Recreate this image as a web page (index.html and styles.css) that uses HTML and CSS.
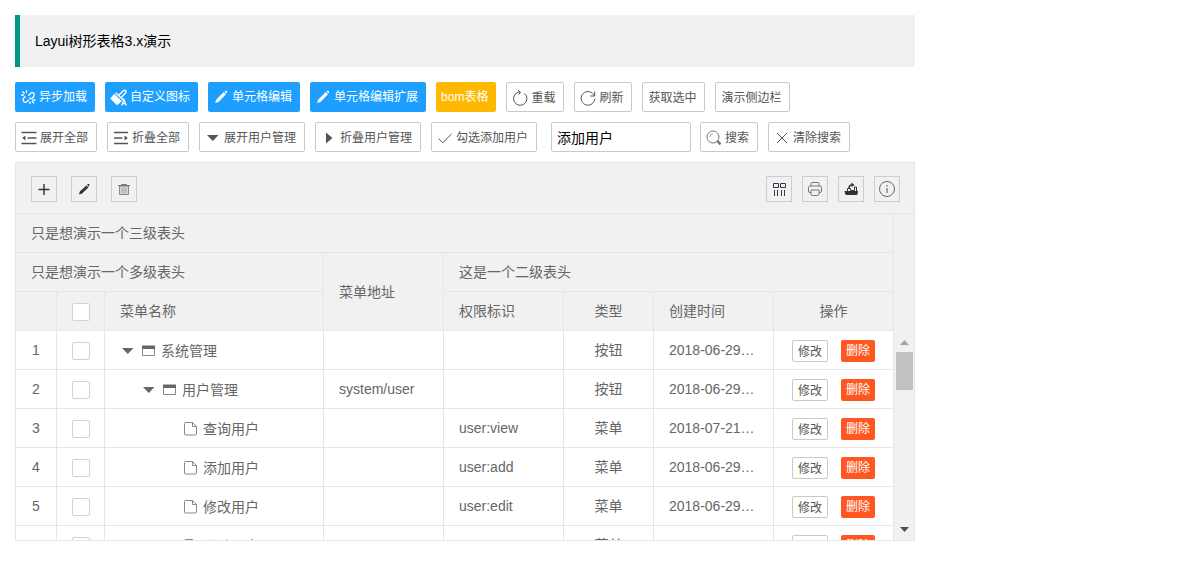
FILE: index.html
```html
<!DOCTYPE html>
<html lang="zh-CN">
<head>
<meta charset="utf-8">
<title>Layui树形表格3.x演示</title>
<link rel="stylesheet" href="styles.css">
</head>
<body>
<svg class="sprite" aria-hidden="true">
  <symbol id="i-down" viewBox="0 0 16 16"><path d="M2 5h11.500L7.800 11z" fill="currentColor"/></symbol>
  <symbol id="i-right" viewBox="0 0 16 16"><path d="M5 2.500v11L11.500 8z" fill="currentColor"/></symbol>
  <symbol id="i-window" viewBox="0 0 16 16"><path d="M1.500 3.500h12v9h-12z" fill="none" stroke="#888"/><path d="M1 2.500h13v3.500H1z" fill="currentColor"/></symbol>
  <symbol id="i-file" viewBox="0 0 16 16"><path d="M2.500 1.500h7l4 4V13q0 1-1 1h-10q-1 0-1-1V2.500q0-1 1-1zM9.500 1.500v4h4" fill="none" stroke="#888"/></symbol>
  <symbol id="i-pen" viewBox="0 0 16 16"><path d="M2.200 14l1-3.300 7.600-7.600 2.200 2.200-7.500 7.600zM11.600 2.500l.7-.6q.8-.5 1.500.2t.2 1.500l-.6.8z" fill="currentColor"/></symbol>
  <symbol id="i-edit" viewBox="0 0 16 16"><path d="M3 13.500l.8-3 6.600-6 2 2-6.600 6.200zM11 4l1-.9q.8-.4 1.300.1t.1 1.300l-.9 1z" fill="currentColor"/></symbol>
  <symbol id="i-link" viewBox="0 0 16 16"><g fill="none" stroke="currentColor" stroke-width="1.300"><path d="M5.500 7.200L3.800 9q-1.500 2 0 3.400t3.400 0L9 10.600M8.400 6.700l2.300-2.400q1.700-1.300 3 0t0 3.200L11.500 10M9.500 8.500l1.700 1.800"/><path d="M1 6h3M2.300 2.500l2.400 2M6.500 1v3M12 12l2.200 2.400M10 12.500V15M12.500 11h3"/></g></symbol>
  <symbol id="i-brush" viewBox="0 0 16 16"><path d="M4 4.500l7 6.800-2 2.200-2.500 1.700L.2 9z" fill="currentColor"/><path d="M5.300 3.500l7 6.700M8.500 5.700l4.200-4.200q1.200-.8 2 0t0 2L10.800 7.800" fill="none" stroke="currentColor" stroke-width="1.300"/><path d="M11 15.500l2.100-5.500 2.200 5.500M11.800 13.800h2.700" fill="none" stroke="currentColor" stroke-width="1.200"/></symbol>
  <symbol id="i-reload" viewBox="0 0 16 16"><path d="M8 2.200H6.200A6.700 6.700 0 1 0 12.600 3.500M5.800 0l2.800 2.200-2 2.400" fill="none" stroke="currentColor"/></symbol>
  <symbol id="i-refresh" viewBox="0 0 16 16"><path d="M14.300 6A6.800 6.800 0 1 0 14.700 9M14.700 1.500V6h-4.500" fill="none" stroke="currentColor"/></symbol>
  <symbol id="i-spread" viewBox="0 0 16 16"><path d="M.5 2.500h15M6.500 8h9M.5 13.500h15" stroke="currentColor" stroke-width="1.500"/><path d="M4.500 5.500v5L1.200 8z" fill="currentColor"/></symbol>
  <symbol id="i-shrink" viewBox="0 0 16 16"><path d="M1 2.500h14M1 8h8.500M1 13.500h14" stroke="currentColor" stroke-width="1.500"/><path d="M11.500 5.500v5L14.800 8z" fill="currentColor"/></symbol>
  <symbol id="i-check" viewBox="0 0 16 16"><path d="M1.500 8.500l4.300 4.200L14.500 4" fill="none" stroke="currentColor"/></symbol>
  <symbol id="i-search" viewBox="0 0 16 16"><circle cx="7" cy="7" r="6" fill="none" stroke="#777"/><path d="M3.800 7A3.300 3.300 0 0 1 7 3.800" fill="none" stroke="#777" stroke-width=".7"/><path d="M11.300 10.800l3.200 3.600" stroke="#777" stroke-width="2.400"/></symbol>
  <symbol id="i-close" viewBox="0 0 16 16"><path d="M3 3l10 10M13 3L3 13" stroke="currentColor"/></symbol>
  <symbol id="i-plus" viewBox="0 0 16 16"><path d="M8 3v11M2.500 8.500h11" stroke="currentColor" stroke-width="1.400"/></symbol>
  <symbol id="i-trash" viewBox="0 0 16 16"><path d="M3.500 5h9v8.500h-9z" fill="#d4d6cf" stroke="#888"/><path d="M2 4.500h12M5.500 4V3.500h5V4" fill="none" stroke="#777"/><path d="M6 6.500v5.500M8 6.500v5.500M10 6.500v5.500" stroke="#aaa"/></symbol>
  <symbol id="i-cols" viewBox="0 0 16 16"><path d="M2.500 2.500h5v4h-5zM9.500 2.500h5v4h-5zM3.500 9v6M6.500 9v6M10.500 9v6M13.500 9v6" fill="none" stroke="#43304a"/></symbol>
  <symbol id="i-print" viewBox="0 0 16 16"><path d="M4 5V2.500q0-1 1-1h6q1 0 1 1V5M4 11.500H2.500Q1.500 11.500 1.500 10V6.500Q1.500 5 3 5h10q1.500 0 1.500 1.500V10q0 1.500-1 1.500H12M4 9h8v4q0 1.500-1.500 1.500h-5Q4 14.500 4 13z" fill="none" stroke="#777"/></symbol>
  <symbol id="i-export" viewBox="0 0 16 16"><path d="M1.500 10h13.500q-.2 4-1.500 4H3.500Q2 14 1.500 10z" fill="currentColor"/><path d="M4.500 10V7.500h3V9.500h4V6H13.500V10" fill="none" stroke="currentColor"/><path d="M6 7Q6 4 9 4" fill="none" stroke="currentColor" stroke-width="1.400"/><path d="M8.500 1.500v4.500L11.500 4z" fill="currentColor"/></symbol>
  <symbol id="i-info" viewBox="0 0 16 16"><circle cx="8" cy="8" r="7.500" fill="none" stroke="#666"/><path d="M8 7v5M8 4v1.500" stroke="#777" stroke-width="1.300"/></symbol>
</svg>

<main class="page">
  <blockquote class="quote">Layui树形表格3.x演示</blockquote>

  <div class="bar">
    <button class="btn btn-blue" type="button"><svg class="icon"><use href="#i-link"/></svg>异步加载</button>
    <button class="btn btn-blue" type="button"><svg class="icon icon-wide"><use href="#i-brush"/></svg>自定义图标</button>
    <button class="btn btn-blue" type="button"><svg class="icon"><use href="#i-pen"/></svg>单元格编辑</button>
    <button class="btn btn-blue" type="button"><svg class="icon"><use href="#i-pen"/></svg>单元格编辑扩展</button>
    <button class="btn btn-yellow" type="button">bom表格</button>
    <button class="btn btn-plain" type="button"><svg class="icon"><use href="#i-reload"/></svg>重载</button>
    <button class="btn btn-plain" type="button"><svg class="icon"><use href="#i-refresh"/></svg>刷新</button>
    <button class="btn btn-plain" type="button">获取选中</button>
    <button class="btn btn-plain" type="button">演示侧边栏</button>
  </div>

  <div class="bar">
    <button class="btn btn-plain" type="button"><svg class="icon"><use href="#i-spread"/></svg>展开全部</button>
    <button class="btn btn-plain" type="button"><svg class="icon"><use href="#i-shrink"/></svg>折叠全部</button>
    <button class="btn btn-plain" type="button"><svg class="icon"><use href="#i-down"/></svg>展开用户管理</button>
    <button class="btn btn-plain" type="button"><svg class="icon"><use href="#i-right"/></svg>折叠用户管理</button>
    <button class="btn btn-plain" type="button"><svg class="icon"><use href="#i-check"/></svg>勾选添加用户</button>
    <div class="search">
      <input class="input" type="text" value="添加用户" aria-label="搜索关键字">
      <button class="btn btn-plain" type="button"><svg class="icon"><use href="#i-search"/></svg>搜索</button>
    </div>
    <button class="btn btn-plain" type="button"><svg class="icon"><use href="#i-close"/></svg>清除搜索</button>
  </div>

  <section class="grid">
    <div class="tools">
      <div class="tools-left">
        <button class="tool" type="button" aria-label="添加"><svg class="icon"><use href="#i-plus"/></svg></button>
        <button class="tool" type="button" aria-label="编辑"><svg class="icon"><use href="#i-edit"/></svg></button>
        <button class="tool" type="button" aria-label="删除"><svg class="icon"><use href="#i-trash"/></svg></button>
      </div>
      <div class="tools-right">
        <button class="tool" type="button" aria-label="筛选列"><svg class="icon"><use href="#i-cols"/></svg></button>
        <button class="tool" type="button" aria-label="打印"><svg class="icon"><use href="#i-print"/></svg></button>
        <button class="tool" type="button" aria-label="导出"><svg class="icon"><use href="#i-export"/></svg></button>
        <button class="tool" type="button" aria-label="提示"><svg class="icon"><use href="#i-info"/></svg></button>
      </div>
    </div>

    <div class="head">
      <table class="table">
        <colgroup><col class="c-num"><col class="c-check"><col><col class="c-mid"><col class="c-mid"><col class="c-type"><col class="c-mid"><col class="c-mid"></colgroup>
        <thead>
          <tr><th colspan="8">只是想演示一个三级表头</th></tr>
          <tr><th colspan="3">只是想演示一个多级表头</th><th rowspan="2">菜单地址</th><th colspan="4">这是一个二级表头</th></tr>
          <tr><th></th><th class="center"><input class="check" type="checkbox" aria-label="全选"></th><th>菜单名称</th><th>权限标识</th><th class="center">类型</th><th>创建时间</th><th class="center">操作</th></tr>
        </thead>
      </table>
    </div>

    <div class="body">
      <div class="rows">
        <table class="table">
          <colgroup><col class="c-num"><col class="c-check"><col><col class="c-mid"><col class="c-mid"><col class="c-type"><col class="c-mid"><col class="c-mid"></colgroup>
          <tbody>
            <tr><td class="center">1</td><td class="center"><input class="check" type="checkbox" aria-label="选择系统管理"></td>
              <td><div class="node"><svg class="icon arrow"><use href="#i-down"/></svg><svg class="icon"><use href="#i-window"/></svg>系统管理</div></td>
              <td></td><td></td><td class="center">按钮</td><td>2018-06-29…</td>
              <td><div class="acts"><button class="mini btn-plain" type="button">修改</button><button class="mini btn-red" type="button">删除</button></div></td></tr>
            <tr><td class="center">2</td><td class="center"><input class="check" type="checkbox" aria-label="选择用户管理"></td>
              <td><div class="node level-1"><svg class="icon arrow"><use href="#i-down"/></svg><svg class="icon"><use href="#i-window"/></svg>用户管理</div></td>
              <td>system/user</td><td></td><td class="center">按钮</td><td>2018-06-29…</td>
              <td><div class="acts"><button class="mini btn-plain" type="button">修改</button><button class="mini btn-red" type="button">删除</button></div></td></tr>
            <tr><td class="center">3</td><td class="center"><input class="check" type="checkbox" aria-label="选择查询用户"></td>
              <td><div class="node leaf"><svg class="icon"><use href="#i-file"/></svg>查询用户</div></td>
              <td></td><td>user:view</td><td class="center">菜单</td><td>2018-07-21…</td>
              <td><div class="acts"><button class="mini btn-plain" type="button">修改</button><button class="mini btn-red" type="button">删除</button></div></td></tr>
            <tr><td class="center">4</td><td class="center"><input class="check" type="checkbox" aria-label="选择添加用户"></td>
              <td><div class="node leaf"><svg class="icon"><use href="#i-file"/></svg>添加用户</div></td>
              <td></td><td>user:add</td><td class="center">菜单</td><td>2018-06-29…</td>
              <td><div class="acts"><button class="mini btn-plain" type="button">修改</button><button class="mini btn-red" type="button">删除</button></div></td></tr>
            <tr><td class="center">5</td><td class="center"><input class="check" type="checkbox" aria-label="选择修改用户"></td>
              <td><div class="node leaf"><svg class="icon"><use href="#i-file"/></svg>修改用户</div></td>
              <td></td><td>user:edit</td><td class="center">菜单</td><td>2018-06-29…</td>
              <td><div class="acts"><button class="mini btn-plain" type="button">修改</button><button class="mini btn-red" type="button">删除</button></div></td></tr>
            <tr><td class="center">6</td><td class="center"><input class="check" type="checkbox" aria-label="选择删除用户"></td>
              <td><div class="node leaf"><svg class="icon"><use href="#i-file"/></svg>删除用户</div></td>
              <td></td><td></td><td class="center">菜单</td><td>2018-06-29…</td>
              <td><div class="acts"><button class="mini btn-plain" type="button">修改</button><button class="mini btn-red" type="button">删除</button></div></td></tr>
          </tbody>
        </table>
      </div>
      <div class="scroll" aria-hidden="true">
        <svg class="scroll-arrow up" viewBox="0 0 17 17"><path d="M4 10h9L8.500 5z" fill="currentColor"/></svg>
        <div class="thumb"></div>
        <svg class="scroll-arrow down" viewBox="0 0 17 17"><path d="M4 7h9l-4.500 5z" fill="currentColor"/></svg>
      </div>
    </div>
  </section>
</main>
</body>
</html>
```

FILE: styles.css
```css
* { box-sizing: border-box; }

body,
button,
input {
  font-family: "Liberation Sans", "Noto Sans CJK SC", sans-serif;
}

body {
  margin: 0;
  padding: 15px;
  background: #fff;
  color: #000;
  font-size: 14px;
  line-height: 22px;
}

.sprite {
  position: absolute;
  width: 0;
  height: 0;
}

.page { max-width: 900px; }

.quote {
  margin: 0 0 15px;
  padding: 15px;
  border-left: 5px solid #009688;
  background: #f1f1f1;
}

.icon {
  flex: none;
  width: 16px;
  height: 16px;
}

.icon-wide {
  width: 17px;
  height: 17px;
}

/* Buttons above the grid */
.bar {
  display: flex;
  flex-wrap: wrap;
  gap: 10px;
  margin-bottom: 10px;
}

.btn {
  display: flex;
  align-items: center;
  gap: 3px;
  height: 30px;
  padding: 0 8px 0 5px;
  border: 0;
  border-radius: 2px;
  color: #fff;
  font-size: 12px;
  line-height: 18px;
  white-space: nowrap;
}

.btn-blue { background: #1e9fff; }
.btn-yellow { background: #ffb800; }
.btn-red { background: #ff5722; }

.btn-plain {
  padding-top: 2px;
  border: 1px solid #c9c9c9;
  background: #fff;
  color: #555;
}

.search {
  display: flex;
  gap: 9px;
  margin-left: 4px;
}

.input {
  width: 140px;
  height: 30px;
  padding: 0 5px;
  border: 1px solid #c9c9c9;
  border-radius: 2px;
  background: #fff;
  color: #000;
  font-size: 14px;
}

/* Grid frame and its toolbar */
.grid {
  border: 1px solid #e6e6e6;
  color: #666;
}

.tools {
  display: flex;
  justify-content: space-between;
  padding: 13px 14px 11px 15px;
  border-bottom: 1px solid #e6e6e6;
  background: #f1f1f1;
}

.tools-left { display: flex; gap: 14px; }
.tools-right { display: flex; gap: 10px; }

.tool {
  display: flex;
  align-items: center;
  justify-content: center;
  width: 26px;
  height: 26px;
  padding: 0;
  border: 1px solid #ccc;
  background: transparent;
  color: #333;
}

/* Header and rows share one column plan */
.head {
  padding-right: 20px;
  background: #f1f1f1;
}

.table {
  width: 100%;
  table-layout: fixed;
  border-collapse: separate;
  border-spacing: 0;
}

.c-num { width: 41px; }
.c-check { width: 48px; }
.c-mid { width: 120px; }
.c-type { width: 90px; }

.table th,
.table td {
  height: 39px;
  padding: 0 15px;
  border-right: 1px solid #e6e6e6;
  border-bottom: 1px solid #e6e6e6;
  font-weight: 400;
  text-align: left;
  white-space: nowrap;
  overflow: hidden;
  text-overflow: ellipsis;
}

.table .center {
  padding: 0;
  text-align: center;
}

.check {
  appearance: none;
  display: block;
  width: 18px;
  height: 18px;
  margin: 2px auto 0;
  border: 1px solid #d2d2d2;
  border-radius: 2px;
  background: #fff;
}

.body { display: flex; }

.rows {
  flex: 1;
  min-width: 0;
  height: 209px;
  overflow: hidden;
}

.node {
  display: flex;
  align-items: center;
  gap: 4px;
  padding-top: 2px;
}

.arrow { margin-right: 1px; }
.level-1 { padding-left: 21px; }
.leaf { padding-left: 63px; }

.acts {
  display: flex;
  justify-content: center;
  gap: 13px;
  margin: 2px -15px 0;
}

.mini {
  height: 22px;
  padding: 0 5px;
  border-radius: 2px;
  font-size: 12px;
  line-height: 20px;
}

.mini.btn-plain { padding-top: 1px; }

.btn-red {
  border: 0;
  color: #fff;
}

.scroll {
  display: flex;
  flex-direction: column;
  width: 20px;
  padding: 4px 1px 3px 2px;
  background: #f1f1f1;
}

.scroll-arrow {
  width: 17px;
  height: 17px;
}

.up { color: #a3a3a3; }

.down {
  margin-top: auto;
  color: #505050;
}

.thumb {
  height: 38px;
  background: #c1c1c1;
}
```
